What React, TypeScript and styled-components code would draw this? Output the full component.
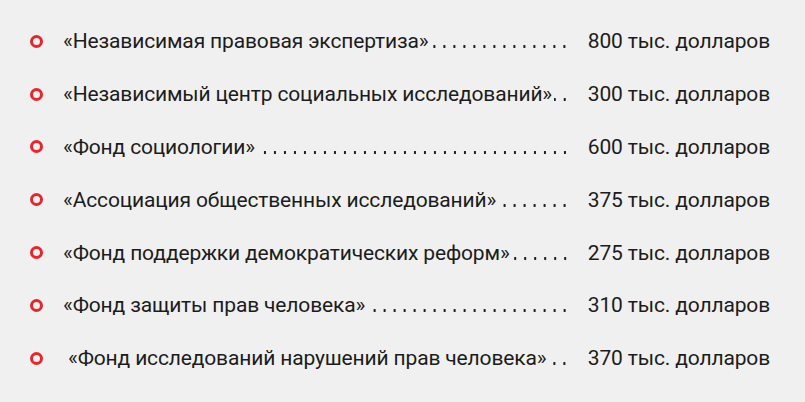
import React from "react";
import styled, { createGlobalStyle } from "styled-components";

const Global = createGlobalStyle`
  html, body { margin: 0; padding: 0; background: #f0f0f0; }
  body { font-family: "Roboto", "Liberation Sans", sans-serif; }
`;

const List = styled.ul`
  list-style: none;
  margin: 0;
  padding: 15px 35px 0 30px;
  width: 805px;
  height: 402px;
  box-sizing: border-box;
  overflow: hidden;
`;

const Row = styled.li`
  display: flex;
  align-items: center;
  height: 52.8px;
  color: #1c1c1c;
  font-size: 21px;
  letter-spacing: -0.15px;
`;

const Bullet = styled.span`
  flex: none;
  width: 13px;
  height: 13px;
  box-sizing: border-box;
  border: 3.5px solid #e3272d;
  border-radius: 50%;
  margin-right: 20px;
`;

const Name = styled.span<{ $indent?: boolean }>`
  flex: none;
  white-space: nowrap;
  padding-left: ${(p) => (p.$indent ? "5px" : "0")};
`;

const Leader = styled.span`
  flex: 1;
  min-width: 0;
  height: 14px;
  margin: 0 18px 0 2px;
  background-image: radial-gradient(circle, #1c1c1c 1.1px, transparent 1.5px);
  background-size: 10px 3px;
  background-repeat: repeat-x;
  background-position: right bottom;
`;

const Amount = styled.span`
  flex: none;
  white-space: nowrap;
`;

const items = [
  { name: "«Независимая правовая экспертиза»", amount: "800 тыс. долларов" },
  { name: "«Независимый центр социальных исследований»", amount: "300 тыс. долларов" },
  { name: "«Фонд социологии»", amount: "600 тыс. долларов" },
  { name: "«Ассоциация общественных исследований»", amount: "375 тыс. долларов" },
  { name: "«Фонд поддержки демократических реформ»", amount: "275 тыс. долларов" },
  { name: "«Фонд защиты прав человека»", amount: "310 тыс. долларов" },
  { name: "«Фонд исследований нарушений прав человека»", amount: "370 тыс. долларов", indent: true },
];

export default function App() {
  return (
    <>
      <Global />
      <List>
        {items.map((it) => (
          <Row key={it.name}>
            <Bullet />
            <Name $indent={it.indent}>{it.name}</Name>
            <Leader />
            <Amount>{it.amount}</Amount>
          </Row>
        ))}
      </List>
    </>
  );
}
